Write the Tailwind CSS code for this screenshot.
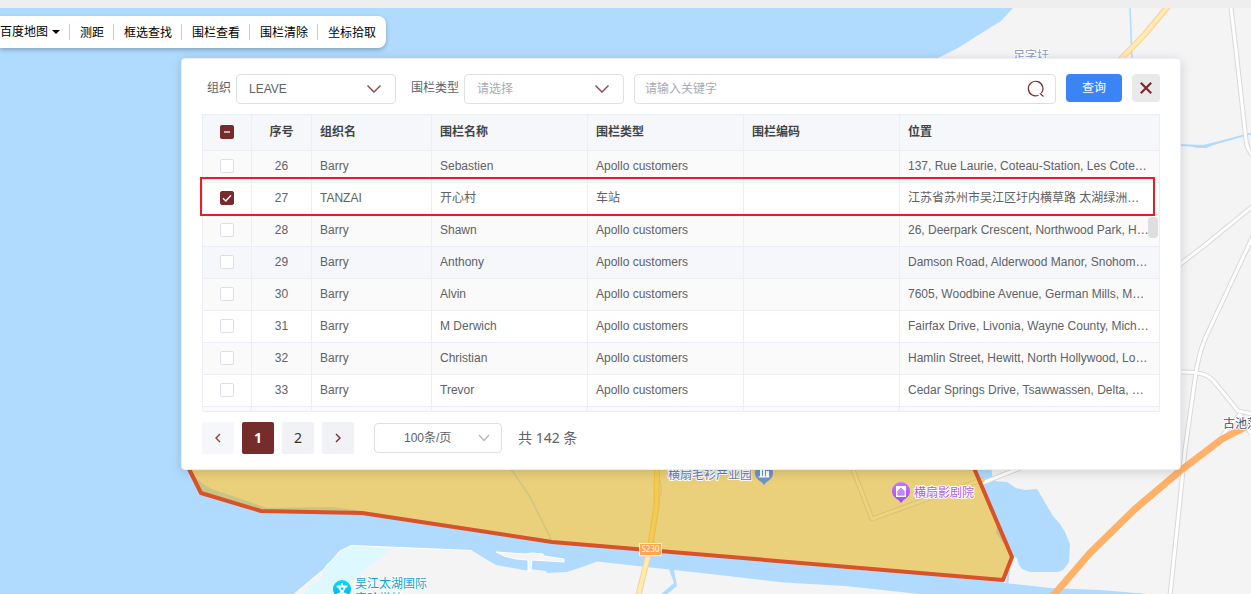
<!DOCTYPE html>
<html lang="zh-CN">
<head>
    <meta charset="UTF-8">
    <meta name="viewport" content="width=device-width, initial-scale=1.0">
    <title>围栏查看</title>
    <script src="https://cdn.jsdelivr.net/npm/@tailwindcss/browser@4"></script>
</head>
<body class="relative min-h-screen overflow-hidden bg-[#f4f4f4] font-['Liberation_Sans','Noto_Sans_CJK_SC',sans-serif] text-xs text-[#606266]">
    <!-- Map -->
    <svg class="absolute inset-0 h-full w-full" fill="none" stroke-linejoin="round" aria-hidden="true">
        <defs>
            <linearGradient id="pinPurple" x1="0" y1="0" x2="0" y2="1"><stop offset="0" stop-color="#c07bff"/><stop offset="1" stop-color="#a044fa"/></linearGradient>
            <linearGradient id="pinCyan" x1="0" y1="0" x2="0" y2="1"><stop offset="0" stop-color="#00dcff"/><stop offset="1" stop-color="#00b4f2"/></linearGradient>
        </defs>
        <!-- lake -->
        <path fill="#b0dbff" d="M0 0H1020L1013 8L1001 21L980 34L958 48L938 58L900 300L1000 540L1008 583L1050 588L1100 590L1150 594H0Z"/>
        <path fill="#f4f4f4" d="M1012 556L1003 583L1050 587L1100 589L1150 594H1251V470H975Z"/>
        <path fill="#b0dbff" d="M970 465H991L993 481L1007 482L1016 488L1025 490L1037 489L1053 516L1060 524L1065 532L1070 544L1069 562L1063 570L1058 572H1030L1022 569L1019 565L1017 558L1012 556Z"/>
        <path stroke="#b0dbff" stroke-width="2" d="M1009 570L1007 585"/>
        <!-- south shore -->
        <path fill="#f4f4f4" d="M293 595L323 570L340 551L351 545.500L472 550.500L484 558L496 565L527 570.500L529 569L546 571L547 573L567 572L585 566L597 561.500L669 569.500L674 583L660 595Z"/>
        <path fill="#ddf8ff" d="M303 595L310 585L321 579L326 565L345 549L352 546L391 549L378 560L362 572L340 595Z"/>
        <path stroke="#fff" d="M293 595L323 570L340 551L351 545.500L472 550.500"/>
        <path fill="#f4f4f4" d="M674 570L728 576L784 582.500L845 586L929 595H666L677 586Z"/>
        <path fill="#f4f4f4" stroke="#fff" d="M496 552L526 554L532 553L543 554L544 556L564 559L564 562L532 560L531 571H528V560L516 559L504 556Z"/>
        <!-- right side roads -->
        <g stroke="#d8d8d8" stroke-width="5">
            <path d="M1231 8L1236 50L1246 140C1247 148 1249 151 1253 156"/>
            <path d="M1170 596L1180 500L1185 450L1196 372C1200 350 1204 340 1210 328L1253 236"/>
            <path d="M1178 372C1204 371 1210 376 1217 385L1238 411L1253 414"/>
            <path d="M1178 266L1205 245L1253 206"/>
            <path d="M980 484L1030 464"/>
            <path d="M1222 436L1240 414M1251 434L1240 414"/>
        </g>
        <path stroke="#b0dbff" stroke-width="2" d="M1178 145L1203 146L1220 142L1253 133"/>
        <path fill="#b0dbff" d="M1185 145L1206 145L1224 141L1206 148L1197 148Z"/>
        <g stroke="#fff" stroke-width="3">
            <path d="M1231 8L1236 50L1246 140C1247 148 1249 151 1253 156"/>
            <path d="M1170 596L1180 500L1185 450L1196 372C1200 350 1204 340 1210 328L1253 236"/>
            <path d="M1178 372C1204 371 1210 376 1217 385L1238 411L1253 414"/>
            <path d="M1178 266L1205 245L1253 206"/>
            <path d="M980 484L1030 464"/>
            <path d="M1222 436L1240 414M1251 434L1240 414"/>
        </g>
        <path stroke="#ffb168" stroke-width="7" d="M1052 597L1090 553L1135 509L1180 471L1222 439L1255 422"/>
        <path stroke="#b0dbff" stroke-width="1.500" d="M1130 8L1132 60"/>
        <path stroke="#fbd38a" stroke-width="6" d="M1170 4L1145 34L1120 60"/>
        <path stroke="#ffe9b5" stroke-width="4" d="M1170 4L1145 34L1120 60"/>
        <path stroke="#fbd38a" stroke-width="6" d="M650 548L638 597"/>
        <path stroke="#ffe9b5" stroke-width="4" d="M650 548L638 597"/>
        <!-- fence -->
        <path fill="#ead07a" d="M186 463L201 493L261 511L362 513L552 542L1003 580L1012 557L971 461Z"/>
        <path fill="#c8c486" d="M196 478L203 484L212 489L267 508L332 507L362 511L552 540L552 542L362 513L261 511L201 493Z"/>
        <path fill="#c8c486" d="M997 524L996 533L1010 552Z"/>
        <path stroke="#cfc683" stroke-width="1.500" d="M510 468L518 479L530 497L551 539"/>
        <path stroke="#dcc06c" stroke-width="5" d="M850 462L872 519L930 498L984 479"/>
        <path stroke="#ecd381" stroke-width="3" d="M850 462L872 519L930 498L984 479"/>
        <path stroke="#dcc06c" d="M660 480C662 490 662 496 658 498"/>
        <path stroke="#edbb40" stroke-width="6" d="M657 460L656.500 505L650 548"/>
        <path stroke="#f0cb55" stroke-width="4" d="M657 460L656.500 505L650 548"/>
        <path stroke="#d95228" stroke-width="4" d="M186 463L201 493L261 511L362 513L552 542L1003 580L1012 557L971 461Z"/>
        <rect x="639.500" y="543.500" width="22" height="12" fill="#ffa54f" stroke="#fff3df"/>
        <text x="650.500" y="552" fill="#fff" font-size="8" text-anchor="middle" class="font-['Noto_Sans',sans-serif]">S230</text>
        <!-- places -->
        <g font-size="12" stroke="#fff" stroke-width="2" paint-order="stroke" class="font-['Noto_Sans_CJK_SC',sans-serif]">
            <text x="1013" y="60" fill="#8e9bc0">足字圩</text>
            <text x="1223" y="428" fill="#47506b">古池荡</text>
            <text x="668" y="479" fill="#5f7db8">横扇毛衫产业园</text>
            <text x="914" y="497" fill="#b45be0">横扇影剧院</text>
            <text x="355" y="588" fill="#0aa5ce">吴江太湖国际</text>
            <text x="355" y="603" fill="#0aa5ce">实验学校</text>
        </g>
        <path fill="#6f93cf" d="M764 464A9 9 0 0 1 773 473C773 478 769 480.500 766.500 482L764 485L761.500 482C759 480.500 755 478 755 473A9 9 0 0 1 764 464Z"/>
        <path fill="#fff" d="M760 468h5v9h-5zM766 471h3v6h-3zM758.500 476.500h11v1h-11z"/>
        <path stroke="#6f93cf" d="M762.500 469V476"/>
        <path fill="url(#pinPurple)" d="M901 482A9 9 0 0 1 910 491C910 496 906 498.500 903.500 500L901 503L898.500 500C896 498.500 892 496 892 491A9 9 0 0 1 901 482Z"/>
        <path fill="#fff" fill-rule="evenodd" d="M896 486H906V497H896ZM901 487.500L897.500 491V495.500H904.500V491Z"/>
        <path fill="#fff" fill-opacity=".25" d="M901 488L904 491V495H898V491Z"/>
        <circle cx="342" cy="589" r="9" fill="url(#pinCyan)"/>
        <path stroke="#fff" stroke-width="2" stroke-linecap="round" d="M342 584V585.500M337.500 586.500H346.500M339.500 588C340.500 591 343 593.500 346.500 594.500M344.500 588C343.500 591 341 593.500 337.500 594.500"/>
    </svg>

    <div class="relative h-2 bg-[#eee]"></div>

    <!-- Toolbar -->
    <nav class="relative mt-2 flex h-8 w-fit items-center rounded-r-lg bg-white text-black shadow-[0_2px_4px_rgba(0,0,0,0.25)]">
        <button class="flex h-4 items-center gap-1 border-r border-[#ccc] pr-[9px] leading-[18px] whitespace-nowrap">
            <span>百度地图</span>
            <svg class="h-2 w-2" viewBox="0 0 8 8"><path d="M0 2h8L4 6z"/></svg>
        </button>
        <button class="h-4 border-r border-[#ccc] pr-[9px] pl-2.5 leading-[18px]">测距</button>
        <button class="h-4 border-r border-[#ccc] pr-[9px] pl-2.5 leading-[18px]">框选查找</button>
        <button class="h-4 border-r border-[#ccc] pr-[9px] pl-2.5 leading-[18px]">围栏查看</button>
        <button class="h-4 border-r border-[#ccc] pr-[9px] pl-2.5 leading-[18px]">围栏清除</button>
        <button class="h-4 px-2.5 leading-[18px]">坐标拾取</button>
    </nav>

    <!-- Fence panel -->
    <section class="relative mt-2.5 mr-[70px] ml-[181px] rounded-sm border border-[#ebeef5] bg-white px-5 py-[15px] shadow-[0_2px_12px_rgba(0,0,0,0.15)]">
        <form class="flex items-start pl-[5px]" onsubmit="return false">
            <label for="org" class="pr-[5px] leading-7">组织</label>
            <div class="relative">
                <select id="org" class="h-[30px] w-40 appearance-none rounded-sm border border-[#dcdfe6] bg-white pl-3">
                    <option>LEAVE</option>
                </select>
                <svg class="pointer-events-none absolute top-2 right-[15px] h-3.5 w-3.5" viewBox="0 0 14 14" fill="none" stroke="#8c4545" stroke-width="1.4"><path d="M.5 3.500L7 10L13.500 3.500"/></svg>
            </div>
            <label for="type" class="pr-[5px] pl-[15px] leading-7">围栏类型</label>
            <div class="relative">
                <select id="type" class="h-[30px] w-40 appearance-none rounded-sm border border-[#dcdfe6] bg-white pl-3 text-[#a8abb2]">
                    <option>请选择</option>
                </select>
                <svg class="pointer-events-none absolute top-2 right-[15px] h-3.5 w-3.5" viewBox="0 0 14 14" fill="none" stroke="#8c4545" stroke-width="1.4"><path d="M.5 3.500L7 10L13.500 3.500"/></svg>
            </div>
            <div class="relative ml-2.5 flex-1">
                <input type="text" aria-label="关键字" placeholder="请输入关键字" class="h-[30px] w-full rounded-sm border border-[#dcdfe6] pr-9 pl-2.5 placeholder:text-[#a8abb2]">
                <svg class="absolute top-1.5 right-[11px] h-[18px] w-[18px]" viewBox="0 0 18 18" fill="none" stroke="#772c2c" stroke-width="1.2"><path d="M11.500 15.300A7.300 7.300 0 1 1 14.300 13.200M12.800 13.400L16.500 16.500"/></svg>
            </div>
            <button class="ml-2.5 h-7 w-14 rounded-sm bg-[#3a84f5] text-white">查询</button>
            <button type="button" aria-label="关闭" class="ml-2.5 flex h-7 w-7 items-center justify-center rounded-sm bg-[#e9e9e9]">
                <svg class="h-3 w-3" viewBox="0 0 12 12" stroke="#772c2c" stroke-width="2.2"><path d="M.8.8L11.200 11.200M11.200.8L.8 11.200"/></svg>
            </button>
        </form>

        <div class="relative mt-2.5">
            <div class="h-[298px] overflow-hidden border-t border-b border-l border-[#ebeef5]">
                <table class="w-full table-fixed border-separate border-spacing-0">
                    <colgroup>
                        <col class="w-[49px]"><col class="w-[60px]"><col class="w-[120px]"><col class="w-[156px]"><col class="w-[156px]"><col class="w-[156px]"><col>
                    </colgroup>
                    <thead class="bg-[#f5f7fb] text-[#444]">
                        <tr class="h-9 text-left">
                            <th class="border-r border-b border-[#ebeef5] p-0 pb-0.5">
                                <label class="relative mx-auto block h-3.5 w-3.5">
                                    <input type="checkbox" aria-label="全选" class="block h-3.5 w-3.5 appearance-none rounded-xs bg-[#772c2c]">
                                    <svg class="pointer-events-none absolute inset-0" viewBox="0 0 14 14"><path fill="#c9acac" d="M4 6h6v2H4z"/></svg>
                                </label>
                            </th>
                            <th class="border-r border-b border-[#ebeef5] p-0 pb-0.5 text-center">序号</th>
                            <th class="border-r border-b border-[#ebeef5] px-2 pt-0 pb-0.5">组织名</th>
                            <th class="border-r border-b border-[#ebeef5] px-2 pt-0 pb-0.5">围栏名称</th>
                            <th class="border-r border-b border-[#ebeef5] px-2 pt-0 pb-0.5">围栏类型</th>
                            <th class="border-r border-b border-[#ebeef5] px-2 pt-0 pb-0.5">围栏编码</th>
                            <th class="border-r border-b border-[#ebeef5] px-2 pt-0 pb-0.5">位置</th>
                        </tr>
                    </thead>
                    <tbody id="fenceRows"></tbody>
                </table>
            </div>
            <!-- scrollbar thumb -->
            <div class="absolute top-[103px] right-0.5 h-[21px] w-2.5 rounded-sm bg-[#dddee0]"></div>
            <!-- highlight frame -->
            <div class="pointer-events-none absolute top-[63px] right-[5px] -left-0.5 h-[39px] border-2 border-[#ed1c24]"></div>
        </div>

        <!-- Pagination -->
        <div class="mt-2.5 flex h-8 items-center gap-2 font-['Noto_Sans','Noto_Sans_CJK_SC',sans-serif] text-sm">
            <button aria-label="上一页" class="flex h-8 w-8 items-center justify-center rounded-xs bg-[#f5f7fb]">
                <svg class="h-2.5 w-2.5" viewBox="0 0 10 10" fill="none" stroke="#8c3f3f" stroke-width="1.4"><path d="M7 1L3 5L7 9"/></svg>
            </button>
            <button class="h-8 w-8 rounded-xs bg-[#772c2c] font-bold text-white">1</button>
            <button class="h-8 w-8 rounded-xs bg-[#f0f2f5] text-[#303133]">2</button>
            <button aria-label="下一页" class="flex h-8 w-8 items-center justify-center rounded-xs bg-[#f0f2f5]">
                <svg class="h-2.5 w-2.5" viewBox="0 0 10 10" fill="none" stroke="#772c2c" stroke-width="1.4"><path d="M3 1L7 5L3 9"/></svg>
            </button>
            <div class="relative ml-3">
                <select aria-label="每页条数" class="block h-[30px] w-32 appearance-none rounded-sm border border-[#dcdfe6] bg-white pr-6 pl-[29px] font-['Liberation_Sans','Noto_Sans_CJK_SC',sans-serif] text-xs">
                    <option>100条/页</option>
                </select>
                <svg class="pointer-events-none absolute top-2.5 right-3 h-3 w-3" viewBox="0 0 12 12" fill="none" stroke="#b3b6bd" stroke-width="1.2"><path d="M1 2L6 7.500L11 2"/></svg>
            </div>
            <span class="ml-2">共 142 条</span>
        </div>
    </section>

    <script>
        const rows = [
            { no: 26, org: 'Barry', name: 'Sebastien', type: 'Apollo customers', address: '137, Rue Laurie, Coteau-Station, Les Cote…' },
            { no: 27, org: 'TANZAI', name: '开心村', type: '车站', address: '江苏省苏州市吴江区圩内横草路 太湖绿洲…', checked: true },
            { no: 28, org: 'Barry', name: 'Shawn', type: 'Apollo customers', address: '26, Deerpark Crescent, Northwood Park, H…' },
            { no: 29, org: 'Barry', name: 'Anthony', type: 'Apollo customers', address: 'Damson Road, Alderwood Manor, Snohom…', active: true },
            { no: 30, org: 'Barry', name: 'Alvin', type: 'Apollo customers', address: '7605, Woodbine Avenue, German Mills, M…' },
            { no: 31, org: 'Barry', name: 'M Derwich', type: 'Apollo customers', address: 'Fairfax Drive, Livonia, Wayne County, Mich…' },
            { no: 32, org: 'Barry', name: 'Christian', type: 'Apollo customers', address: 'Hamlin Street, Hewitt, North Hollywood, Lo…' },
            { no: 33, org: 'Barry', name: 'Trevor', type: 'Apollo customers', address: 'Cedar Springs Drive, Tsawwassen, Delta, …' },
            { no: '', org: '', name: '', type: '', address: '' }
        ];

        const cell = 'truncate border-r border-b border-[#ebeef5] px-2 pt-0 pb-0.5';
        const tick = '<svg class="pointer-events-none absolute inset-0" viewBox="0 0 14 14" fill="none" stroke="#fff" stroke-width="1.3"><path d="M3 7.300L5.800 10L11 4.300"/></svg>';

        document.getElementById('fenceRows').innerHTML = rows.map((row, i) => {
            const bg = row.active ? 'bg-[#f5f7fb]' : i % 2 ? 'bg-white' : 'bg-[#fafafa]';
            return `
                <tr class="h-8 ${bg}">
                    <td class="border-r border-b border-[#ebeef5] p-0 pb-0.5">
                        <label class="relative mx-auto block h-3.5 w-3.5">
                            <input type="checkbox" aria-label="选择 ${row.no}" ${row.checked ? 'checked' : ''} class="block h-3.5 w-3.5 appearance-none rounded-xs border border-[#dcdfe6] bg-white checked:border-[#772c2c] checked:bg-[#772c2c]">
                            ${row.checked ? tick : ''}
                        </label>
                    </td>
                    <td class="border-r border-b border-[#ebeef5] p-0 pb-0.5 text-center">${row.no}</td>
                    <td class="${cell}">${row.org}</td>
                    <td class="${cell}">${row.name}</td>
                    <td class="${cell}">${row.type}</td>
                    <td class="${cell}"></td>
                    <td class="${cell}">${row.address}</td>
                </tr>`;
        }).join('');
    </script>
</body>
</html>
